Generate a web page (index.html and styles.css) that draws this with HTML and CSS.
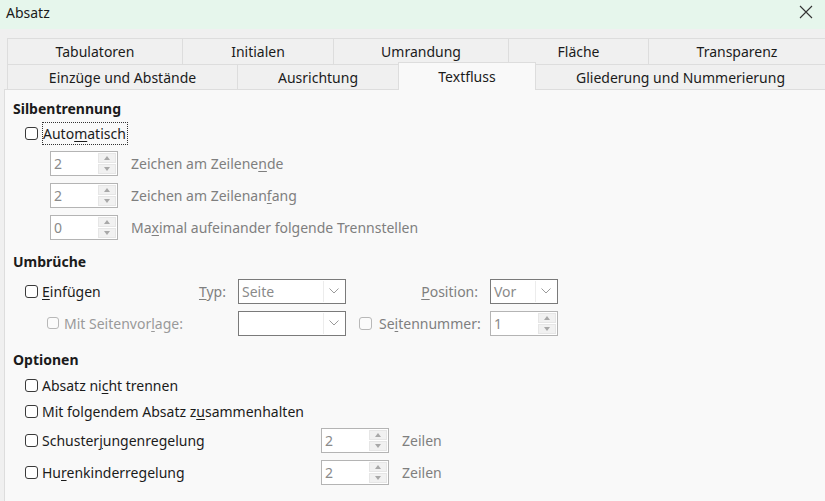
FILE: index.html
```html
<!DOCTYPE html>
<html lang="de">
<head>
<meta charset="utf-8">
<title>Absatz</title>
<link rel="stylesheet" href="styles.css">
</head>
<body>
<div class="titlebar">
  <span class="title">Absatz</span>
  <svg class="close" width="14" height="14" viewBox="0 0 14 14"><path d="M1 1 L13 13 M13 1 L1 13" stroke="#333" stroke-width="1.1" fill="none"/></svg>
</div>
<div class="tabs">
  <div class="tabrow row1">
    <div class="tab">Tabulatoren</div>
    <div class="tab">Initialen</div>
    <div class="tab">Umrandung</div>
    <div class="tab">Fläche</div>
    <div class="tab">Transparenz</div>
  </div>
  <div class="tabrow row2">
    <div class="tab">Einzüge und Abstände</div>
    <div class="tab">Ausrichtung</div>
    <div class="tab active">Textfluss</div>
    <div class="tab">Gliederung und Nummerierung</div>
  </div>
</div>
<div class="panel">
  <div class="heading">Silbentrennung</div>
  <div class="checkrow">
    <span class="cb"></span><span class="lbl focus">Auto<u>m</u>atisch</span>
  </div>
  <div class="spinrow">
    <div class="spin"><span class="val">2</span><span class="btns"><span class="b up"></span><span class="b down"></span></span></div>
    <span class="dim">Zeichen am Zeilene<u>n</u>de</span>
  </div>
  <div class="spinrow">
    <div class="spin"><span class="val">2</span><span class="btns"><span class="b up"></span><span class="b down"></span></span></div>
    <span class="dim">Zeichen am Zeilenan<u>f</u>ang</span>
  </div>
  <div class="spinrow">
    <div class="spin"><span class="val">0</span><span class="btns"><span class="b up"></span><span class="b down"></span></span></div>
    <span class="dim">Ma<u>x</u>imal aufeinander folgende Trennstellen</span>
  </div>

  <div class="heading h2">Umbrüche</div>
  <div class="breaks">
    <div class="c1 first"><span class="group"><span class="cb"></span><span class="lbl"><u>E</u>infügen</span></span><span class="dim"><u>T</u>yp:</span></div>
    <div class="combo"><span class="val">Seite</span><span class="drop"><svg width="10" height="6" viewBox="0 0 10 6"><path d="M0.5 0.5 L5 5 L9.5 0.5" stroke="#9a9a9a" fill="none"/></svg></span></div>
    <div class="c3"><span class="dim"><u>P</u>osition:</span></div>
    <div class="combo"><span class="val">Vor</span><span class="drop"><svg width="10" height="6" viewBox="0 0 10 6"><path d="M0.5 0.5 L5 5 L9.5 0.5" stroke="#9a9a9a" fill="none"/></svg></span></div>

    <div class="c1 second"><span class="cb small off"></span><span class="dim light">Mit Seitenvor<u>l</u>age:</span></div>
    <div class="combo"><span class="val"></span><span class="drop"><svg width="10" height="6" viewBox="0 0 10 6"><path d="M0.5 0.5 L5 5 L9.5 0.5" stroke="#9a9a9a" fill="none"/></svg></span></div>
    <div class="c3 left"><span class="cb off"></span><span class="dim">Se<u>i</u>tennummer:</span></div>
    <div class="spin"><span class="val">1</span><span class="btns"><span class="b up"></span><span class="b down"></span></span></div>
  </div>

  <div class="heading h3">Optionen</div>
  <div class="checkrow">
    <span class="cb"></span><span class="lbl">Absatz ni<u>c</u>ht trennen</span>
  </div>
  <div class="checkrow">
    <span class="cb"></span><span class="lbl">Mit folgendem Absatz z<u>u</u>sammenhalten</span>
  </div>
  <div class="optrow">
    <div class="optlabel"><span class="cb"></span><span class="lbl">Schuster<u>j</u>ungenregelung</span></div>
    <div class="spin"><span class="val">2</span><span class="btns"><span class="b up"></span><span class="b down"></span></span></div>
    <span class="dim">Zeilen</span>
  </div>
  <div class="optrow">
    <div class="optlabel"><span class="cb"></span><span class="lbl">Hu<u>r</u>enkinderregelung</span></div>
    <div class="spin"><span class="val">2</span><span class="btns"><span class="b up"></span><span class="b down"></span></span></div>
    <span class="dim">Zeilen</span>
  </div>
</div>
</body>
</html>
```
FILE: styles.css
```css
* { box-sizing: border-box; }
html, body { margin: 0; padding: 0; }
body {
  width: 825px;
  height: 501px;
  overflow: hidden;
  background: #f0f0f0;
  font-family: "Noto Sans", "Open Sans", sans-serif;
  font-size: 14px;
  color: #1b1b1b;
  display: flex;
  flex-direction: column;
}
u { text-decoration: underline; text-underline-offset: 2px; text-decoration-thickness: 1px; }

.titlebar {
  height: 29px;
  flex: 0 0 29px;
  background: #e6f6ec;
  display: flex;
  align-items: center;
  justify-content: space-between;
  padding: 0 12px 5px 6px;
}
.title { font-size: 14px; }

.tabs {
  padding: 9px 0 0 7px;
  display: flex;
  flex-direction: column;
}
.tabrow { display: grid; }
.row1 { grid-template-columns: 175px 151px 175px 140px 1fr; height: 26px; }
.row2 { grid-template-columns: 230px 161px 138px 1fr; height: 25px; }
.tab {
  display: flex;
  align-items: center;
  justify-content: center;
  border-top: 1px solid #dddddd;
  border-left: 1px solid #dddddd;
  background: #f0f0f0;
  white-space: nowrap;
}
.row1 .tab { padding-bottom: 1px; }
.tab.active {
  background: #f9f9f9;
  margin-top: -2px;
  margin-bottom: -1px;
  border-right: 1px solid #dddddd;
  position: relative;
  z-index: 1;
}
.tab.active + .tab { border-left: none; }

.panel {
  flex: 1;
  margin-left: 4px;
  background: #f9f9f9;
  border-top: 1px solid #dddddd;
  border-left: 1px solid #dddddd;
  padding: 8px 0 0 8px;
  display: flex;
  flex-direction: column;
}
.heading {
  font-weight: bold;
  height: 22px;
  line-height: 22px;
}
.h2 { margin-top: 8px; }
.h3 { margin-top: 10px; }
.h3 + .checkrow { margin-top: 1px; }

.checkrow {
  height: 26px;
  display: flex;
  align-items: center;
  padding-left: 12px;
}
.cb {
  width: 13px;
  height: 13px;
  border: 1px solid #3a3a3a;
  border-radius: 3px;
  background: #ffffff;
  flex: 0 0 auto;
  margin-right: 4px;
}
.cb.off { border-color: #b8b8b8; background: #fbfbfb; }
.cb.small { width: 12px; height: 12px; }
.lbl { white-space: nowrap; }
.focus {
  outline: 1px dotted #333;
  outline-offset: 0;
  padding: 1px 1px 1px 0;
  line-height: 19px;
  margin-left: 1px;
}
.dim { color: #7f7f7f; white-space: nowrap; }
.light { color: #9a9a9a; }

.spinrow {
  height: 32px;
  display: flex;
  align-items: center;
  padding-left: 37px;
  gap: 13px;
}
.checkrow + .spinrow { margin-top: 1px; }

.spin {
  width: 68px;
  height: 25px;
  border: 1px solid #b4b4b4;
  background: #ffffff;
  display: flex;
  justify-content: space-between;
  align-items: stretch;
  padding: 1px;
  flex: 0 0 auto;
}
.val {
  color: #8a8a8a;
  padding-left: 2px;
  line-height: 21px;
}
.btns {
  width: 18px;
  display: flex;
  flex-direction: column;
  gap: 1px;
}
.b {
  flex: 1;
  background: #f1f1f1;
  border: 1px solid #e6e6e6;
  display: flex;
  align-items: center;
  justify-content: center;
}
.b.up::after {
  content: "";
  border-left: 3.5px solid transparent;
  border-right: 3.5px solid transparent;
  border-bottom: 4px solid #a8a8a8;
}
.b.down::after {
  content: "";
  border-left: 3.5px solid transparent;
  border-right: 3.5px solid transparent;
  border-top: 4px solid #a8a8a8;
}

.breaks {
  margin-top: 2px;
  padding-left: 12px;
  display: grid;
  grid-template-columns: 201px 108px 120px 68px;
  grid-auto-rows: 32px;
  column-gap: 12px;
  align-items: center;
}
.c1 { display: flex; align-items: center; }
.c1.first { justify-content: space-between; }
.group { display: flex; align-items: center; }
.c1.second { padding-left: 22px; }
.c1.second .cb { margin-right: 5px; }
.c3 { display: flex; justify-content: flex-end; align-items: center; }
.c3.left { justify-content: flex-start; padding-left: 1px; }
.c3.left .cb { margin-right: 7px; }

.combo {
  height: 25px;
  border: 1px solid #7a7a7a;
  background: #ffffff;
  display: flex;
  justify-content: space-between;
  padding: 1px;
}
.combo .val { color: #8a8a8a; }
.drop {
  width: 21px;
  border-left: 1px solid #ececec;
  display: flex;
  align-items: center;
  justify-content: center;
}

.optrow {
  height: 32px;
  display: flex;
  align-items: center;
  padding-left: 12px;
}
.optlabel {
  width: 296px;
  display: flex;
  align-items: center;
}
.optrow .spin { margin-right: 13px; }
```
